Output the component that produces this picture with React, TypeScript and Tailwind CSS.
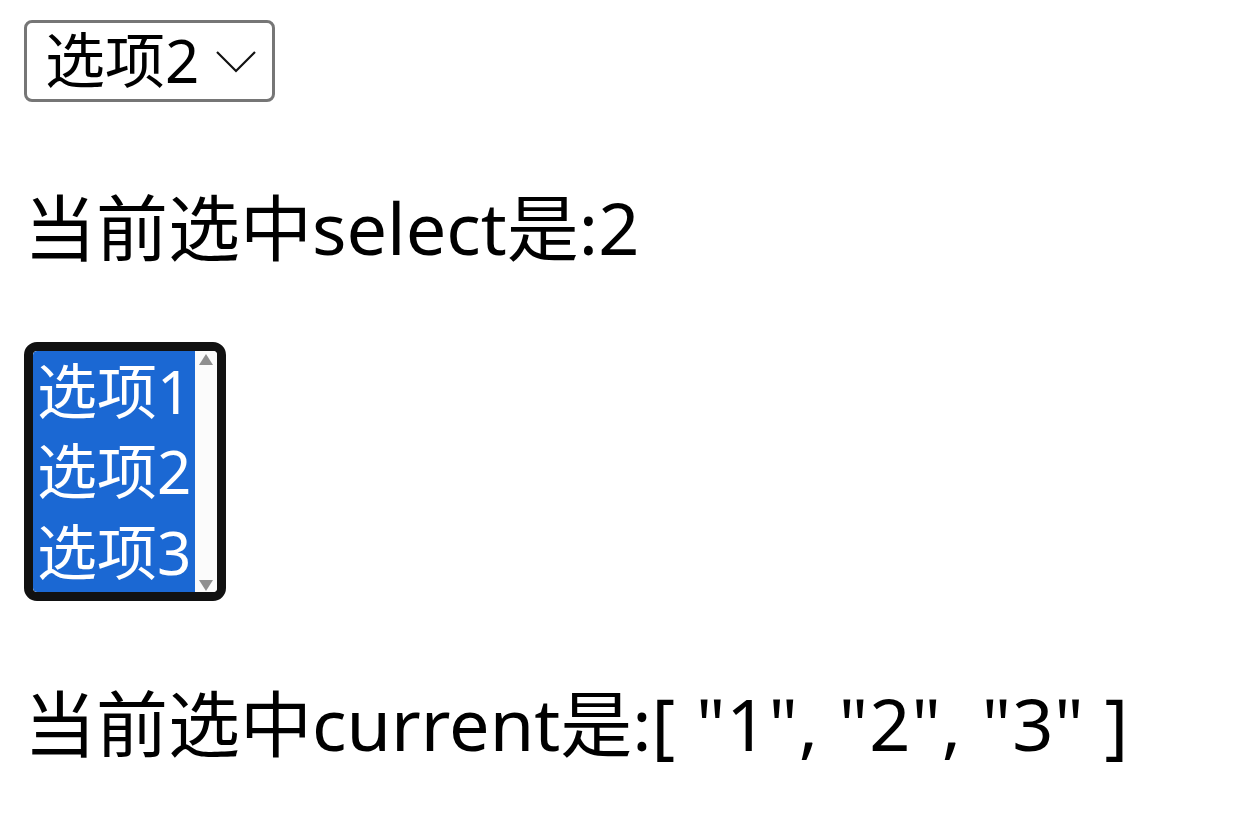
const font = "font-['Noto_Sans','Noto_Sans_CJK_SC',sans-serif]";

function Dropdown({ value }: { value: string }) {
  return (
    <div className="flex h-[82px] w-[251px] items-center justify-between rounded-[8px] border-[3px] border-[#767676] bg-white pl-[18px] pr-[16px] text-[60px] leading-none text-black">
      <span className="-mt-[2px]">{value}</span>
      <svg width="40" height="24" viewBox="0 0 40 24" className="mt-[2px]">
        <path d="M1 2 L20 21 L39 2" fill="none" stroke="#111" strokeWidth="2.2" />
      </svg>
    </div>
  );
}

function ListBox({ options }: { options: string[] }) {
  return (
    <div className="flex h-[259px] w-[202px] overflow-hidden rounded-[13px] border-[9px] border-[#111] bg-white">
      <div className="flex flex-1 flex-col overflow-hidden rounded-l-[4px] bg-[#1b68d3]">
        {options.map((o) => (
          <div key={o} className="flex h-[81px] items-center pl-[4px] text-[60px] leading-none text-white">
            {o}
          </div>
        ))}
      </div>
      <div className="flex w-[22px] flex-col items-center justify-between bg-[#fbfbfb] pb-[1px] pt-[3px]">
        <svg width="14" height="11" viewBox="0 0 14 11">
          <path d="M7 0 L14 11 L0 11 Z" fill="#8f8f8f" />
        </svg>
        <svg width="14" height="11" viewBox="0 0 14 11">
          <path d="M0 0 L14 0 L7 11 Z" fill="#8f8f8f" />
        </svg>
      </div>
    </div>
  );
}

export default function App() {
  const current = ["1", "2", "3"];
  return (
    <div className={`${font} min-h-screen bg-white pl-[24px] pt-[20px] text-black`}>
      <Dropdown value="选项2" />
      <p className="mt-[85px] text-[72px] leading-[80px]">当前选中select是:2</p>
      <div className="mt-[75px]">
        <ListBox options={["选项1", "选项2", "选项3"]} />
      </div>
      <p className="mt-[82px] text-[72px] leading-[80px]">
        当前选中current是:<span className="tracking-[1px]">[ {current.map((c) => `"${c}"`).join(", ")} ]</span>
      </p>
    </div>
  );
}
